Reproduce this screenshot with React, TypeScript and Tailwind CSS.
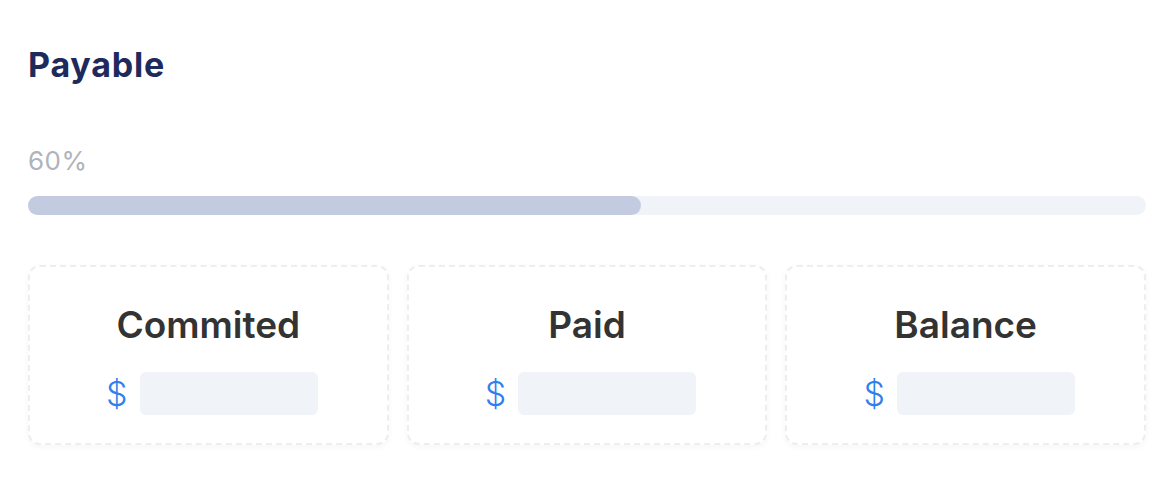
const cards = ['Commited', 'Paid', 'Balance'];

const StatCard = ({ title }: { title: string }) => (
  <div className="flex flex-col items-center rounded-xl border-2 border-dashed border-[#eceef1] bg-white pt-[32px] pb-[28px] shadow-[0_2px_6px_rgba(0,0,0,0.04)]">
    <div className="text-[37px] font-semibold leading-[52px] text-[#333333]">{title}</div>
    <div className="ml-[7px] mt-[21px] flex items-center gap-[12px]">
      <span className="text-[34px] font-light leading-none text-[#2f80ed]">$</span>
      <div className="h-[43px] w-[178px] rounded-md bg-[#f0f3f7]" />
    </div>
  </div>
);

export default function App() {
  return (
    <div
      className="min-h-[498px] w-[1174px] bg-white pl-[28px] pr-[28px] pt-[43px]"
      style={{ fontFamily: 'Inter, "Noto Sans", sans-serif' }}
    >
      <h1 className="text-[34px] font-bold leading-[44px] tracking-[0.8px] text-[#1e2a5c]">Payable</h1>

      <div className="mt-[58px] text-[26px] leading-[32px] tracking-[0.5px] text-[#b0b3bb]">60%</div>

      {/* progress bar */}
      <div className="mt-[19px] h-[19px] w-full rounded-full bg-[#f0f3f7]">
        <div className="h-full rounded-full bg-[#c3cbe0]" style={{ width: '54.8%' }} />
      </div>

      <div className="mt-[50px] grid grid-cols-3 gap-[18px]">
        {cards.map((c) => (
          <StatCard key={c} title={c} />
        ))}
      </div>
    </div>
  );
}
